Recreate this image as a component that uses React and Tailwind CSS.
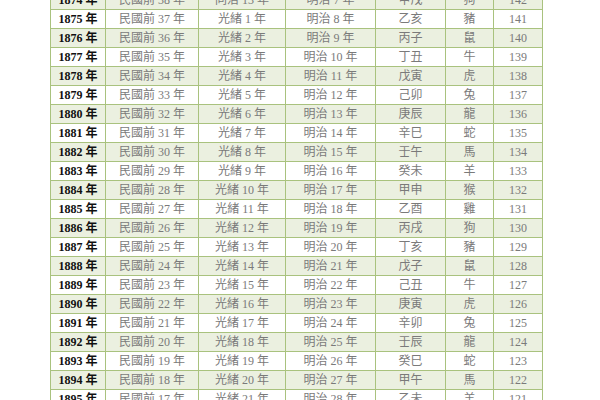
import React from 'react';

const animals = ['狗', '豬', '鼠', '牛', '虎', '兔', '龍', '蛇', '馬', '羊', '猴', '雞'];
const stems = ['甲', '乙', '丙', '丁', '戊', '己', '庚', '辛', '壬', '癸'];
const branches = ['子', '丑', '寅', '卯', '辰', '巳', '午', '未', '申', '酉', '戌', '亥'];

// 1874 = 甲戌
const rows = Array.from({ length: 22 }, (_, i) => {
  const year = 1874 + i;
  return {
    year,
    minguo: 1912 - year,
    qing: i === 0 ? '同治 13 年' : `光緒 ${i} 年`,
    meiji: year - 1867,
    ganzhi: stems[i % 10] + branches[(10 + i) % 12],
    animal: animals[i % 12],
    age: 142 - i,
  };
});

const serif = { fontFamily: '"Liberation Serif", "Noto Sans CJK TC", serif' };

const App = () => {
  return (
    <div className="w-full h-[400px] overflow-hidden bg-white" style={serif}>
      <div className="ml-[50px] mt-[-9px] w-[493px] border-l border-[#a9c27e]">
        {rows.map((r, i) => (
          <div
            key={r.year}
            className={`grid grid-cols-[55px_93px_87px_90px_70px_48px_49px] h-[19px] border-b border-[#a9c27e] text-[12px] leading-[18px] text-[#7a7a7a] ${i % 2 === 0 ? 'bg-[#ebf0e0]' : 'bg-white'}`}
          >
            <div className="border-r border-[#a9c27e] text-center font-bold text-[#111]">{r.year} 年</div>
            <div className="border-r border-[#a9c27e] text-center">民國前 {r.minguo} 年</div>
            <div className="border-r border-[#a9c27e] text-center">{r.qing}</div>
            <div className="border-r border-[#a9c27e] text-center">明治 {r.meiji} 年</div>
            <div className="border-r border-[#a9c27e] text-center">{r.ganzhi}</div>
            <div className="border-r border-[#a9c27e] text-center">{r.animal}</div>
            <div className="border-r border-[#a9c27e] text-center">{r.age}</div>
          </div>
        ))}
      </div>
    </div>
  );
};

export default App;
